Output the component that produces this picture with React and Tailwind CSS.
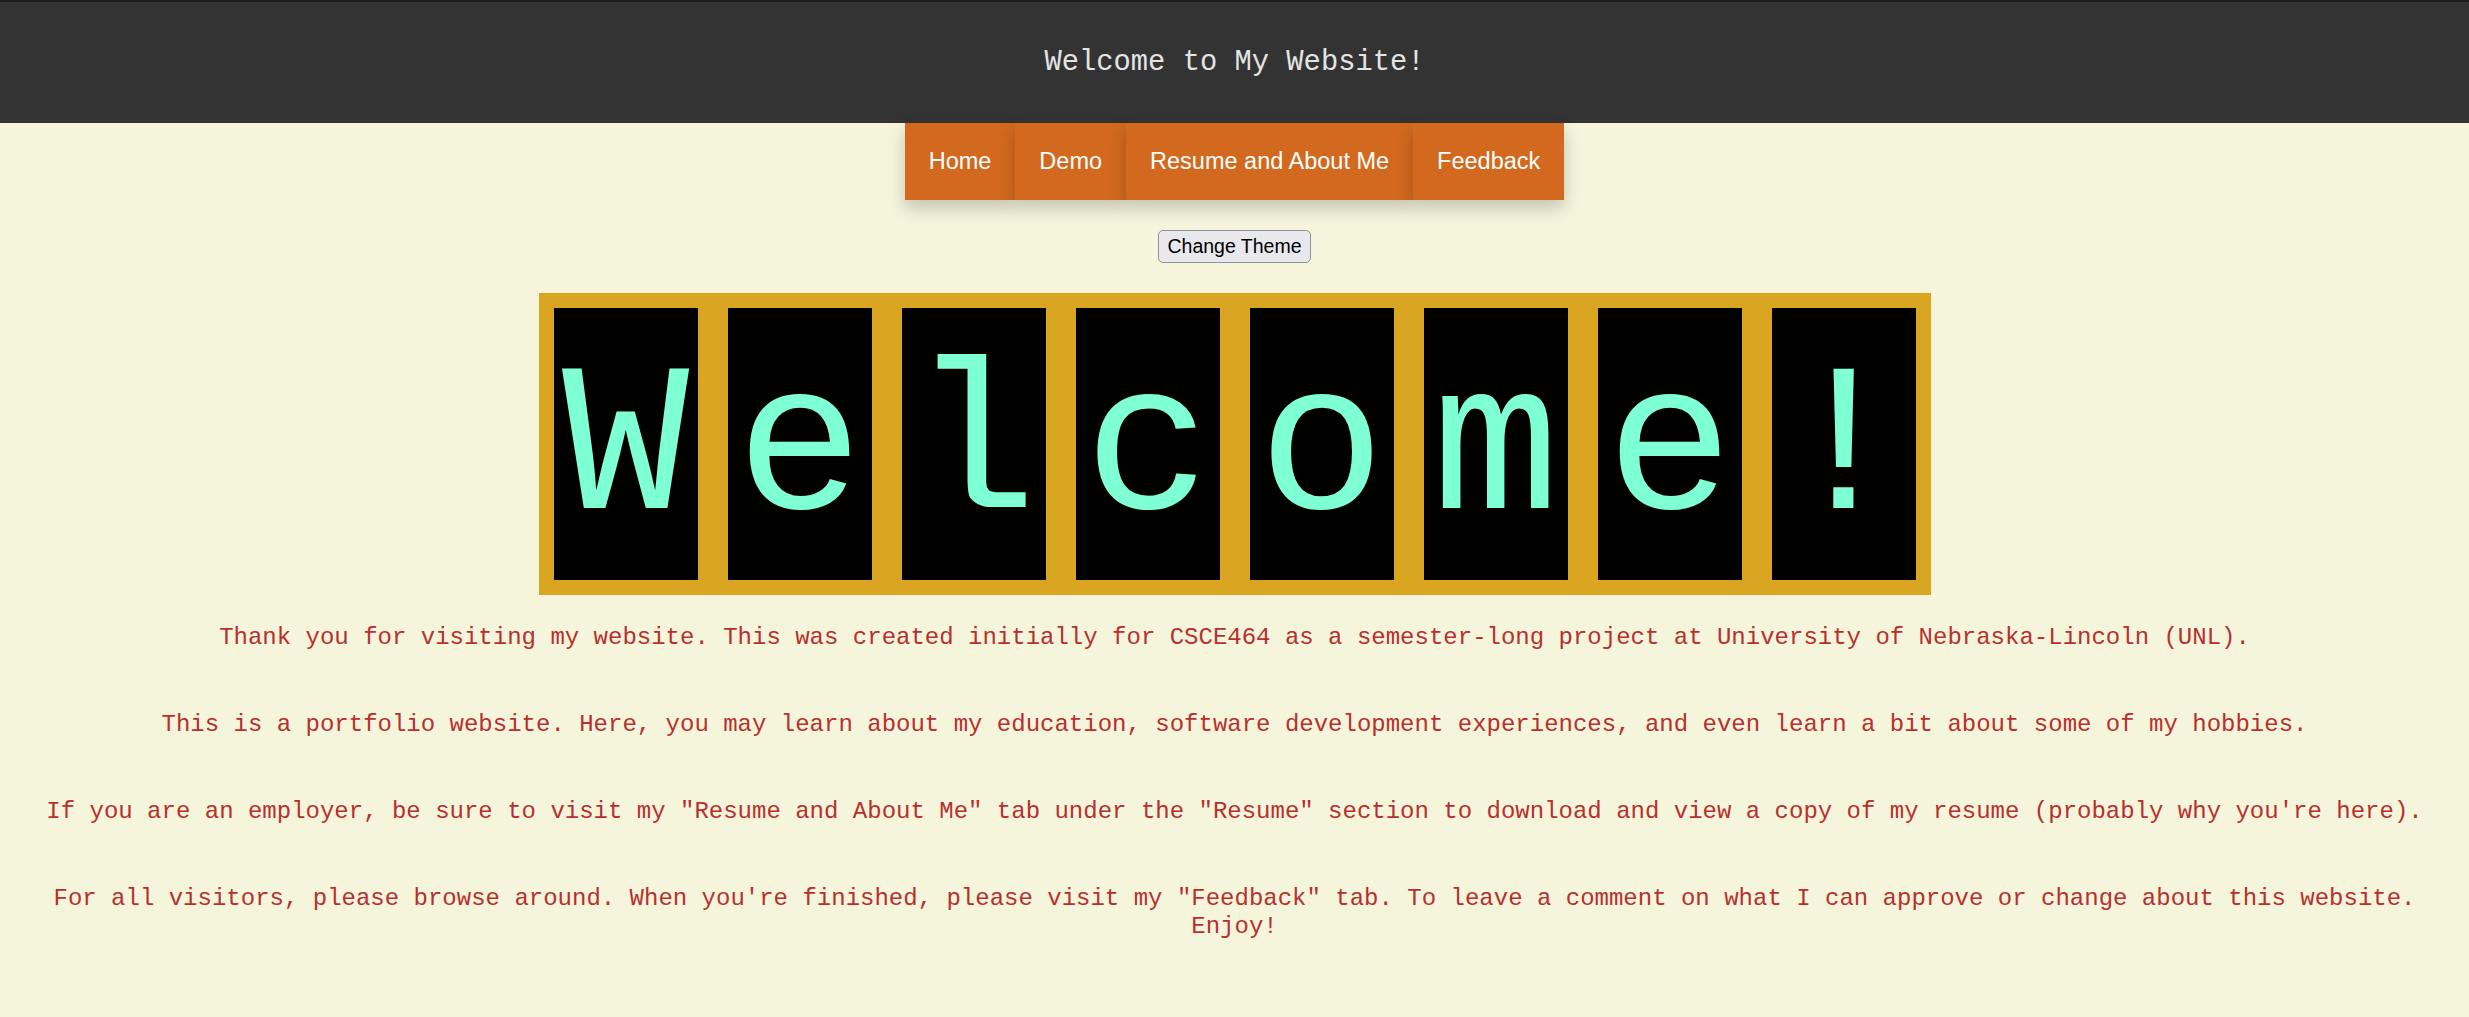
import React from 'react';

const navItems = ['Home', 'Demo', 'Resume and About Me', 'Feedback'];
const letters = ['W', 'e', 'l', 'c', 'o', 'm', 'e', '!'];

const paragraphs = [
  'Thank you for visiting my website. This was created initially for CSCE464 as a semester-long project at University of Nebraska-Lincoln (UNL).',
  'This is a portfolio website. Here, you may learn about my education, software development experiences, and even learn a bit about some of my hobbies.',
  'If you are an employer, be sure to visit my "Resume and About Me" tab under the "Resume" section to download and view a copy of my resume (probably why you\'re here).',
  'For all visitors, please browse around. When you\'re finished, please visit my "Feedback" tab. To leave a comment on what I can approve or change about this website. Enjoy!',
];

const App = () => {
  return (
    <div className="min-h-[1017px] bg-[#f5f5dc]">
      {/* Title bar */}
      <header className="flex h-[123px] items-center justify-center border-t-2 border-[#1c1c1c] bg-[#333333]">
        <h1 className="font-['Liberation_Mono',monospace] text-[28.8px] font-normal text-[#e4e4e4]">
          Welcome to My Website!
        </h1>
      </header>

      {/* Navigation */}
      <nav className="flex justify-center">
        <ul className="flex">
          {navItems.map((item) => (
            <li
              key={item}
              className="bg-[#d2691e] px-6 py-6 font-['Liberation_Sans',sans-serif] text-[23.5px] leading-[29px] text-white shadow-[0_8px_16px_0_rgba(0,0,0,0.2)]"
            >
              {item}
            </li>
          ))}
        </ul>
      </nav>

      <div className="mt-[30px] flex justify-center">
        <button className="h-[33px] rounded-[5px] border border-[#8f8f9d] bg-[#e9e9ed] px-[8px] font-['Liberation_Sans',sans-serif] text-[19.5px] leading-none text-black">
          Change Theme
        </button>
      </div>

      {/* Big welcome sign */}
      <div className="mt-[30px] flex justify-center">
        <div className="flex gap-[30px] bg-[#daa520] p-[15px]">
          {letters.map((ch, i) => (
            <span
              key={i}
              className="block h-[272px] w-[144px] bg-black pt-[16px] text-center font-['Liberation_Mono',monospace] text-[212px] leading-[256px] text-[#7fffd4]"
            >
              {ch}
            </span>
          ))}
        </div>
      </div>

      <div className="mt-[29px] flex flex-col gap-[59px] px-3 pb-10 text-center font-['Liberation_Mono',monospace] text-[24px] leading-[28px] text-[#b8302e]">
        {paragraphs.map((p) => (
          <p key={p}>{p}</p>
        ))}
      </div>
    </div>
  );
};

export default App;
